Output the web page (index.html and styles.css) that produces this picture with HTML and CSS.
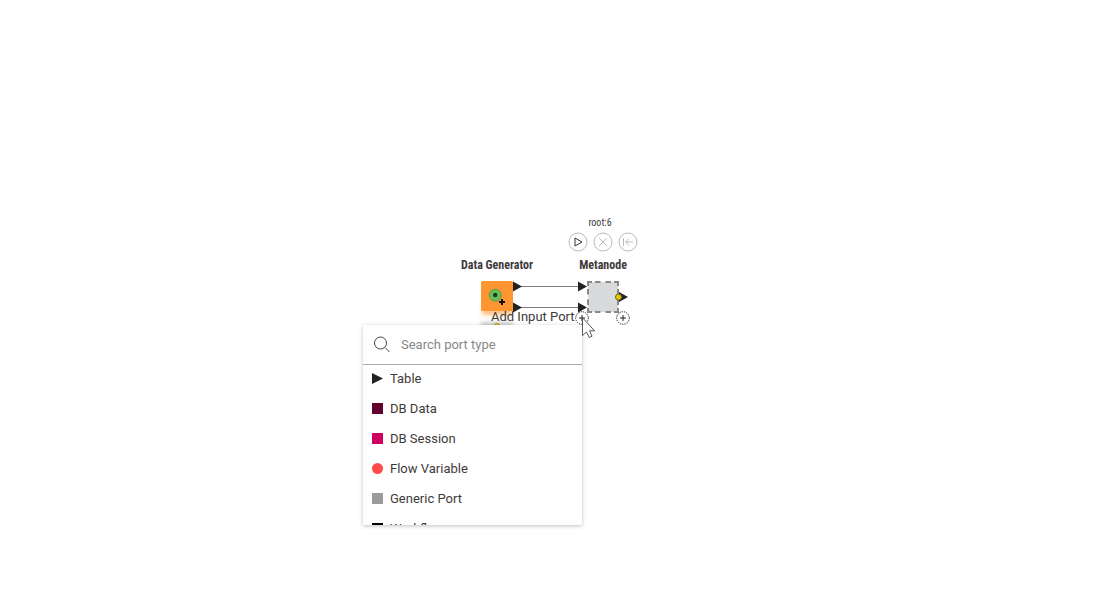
FILE: index.html
```html
<!DOCTYPE html>
<html lang="en">
<head>
<meta charset="utf-8">
<title>Workflow editor</title>
<link rel="stylesheet" href="styles.css">
</head>
<body>
<main class="canvas">
  <svg class="connections" width="240" height="120" viewBox="440 240 240 120" aria-hidden="true">
    <path d="M519 286.500H581M519 307.500H581" stroke="#7d7d7d" fill="none"/>
  </svg>

  <section class="node generator">
    <h2 class="node-name">Data Generator</h2>
    <svg class="node-art" width="60" height="54" viewBox="470 276 60 54" aria-hidden="true">
      <defs><filter id="soft" x="-30%" y="-60%" width="160%" height="220%"><feGaussianBlur stdDeviation="2"/></filter></defs>
      <rect x="482" y="308" width="30" height="7" fill="#ff9632" opacity=".6" filter="url(#soft)"/>
      <rect x="481" y="322" width="32" height="12" rx="2" fill="#aaa" opacity=".6" filter="url(#soft)"/>
      <rect x="481" y="281" width="32" height="30" rx="1.500" fill="#ff9632"/>
      <circle cx="495.200" cy="295.200" r="6" fill="#6bbd58" stroke="#559b4b"/>
      <circle cx="495.200" cy="295" r="2.200" fill="#173b1b"/>
      <path d="M502 299v6M499 302h6" stroke="#111" stroke-width="2"/>
      <circle cx="497" cy="327" r="3.500" fill="#e5cb28" stroke="#ac9820"/>
      <path d="M513 281.500l9 5-9 5zM513 302.500l9 5-9 5z" fill="#222"/>
    </svg>
  </section>

  <section class="node metanode">
    <p class="node-id">root:6</p>
    <div class="actions">
      <button class="action" aria-label="Execute"><svg viewBox="0 0 20 20"><circle cx="10" cy="10" r="9"/><path d="M7 6v8l7-4z" stroke="#333"/></svg></button>
      <button class="action" aria-label="Cancel" disabled><svg viewBox="0 0 20 20"><circle cx="10" cy="10" r="9"/><path d="M6 6l8 8M14 6l-8 8"/></svg></button>
      <button class="action" aria-label="Reset" disabled><svg viewBox="0 0 20 20"><circle cx="10" cy="10" r="9"/><path d="M5.500 6v8M15 10H8M11 6.500L7.500 10l3.500 3.500"/></svg></button>
    </div>
    <h2 class="node-name">Metanode</h2>
    <svg class="node-art" width="80" height="56" viewBox="563 276 80 56" aria-hidden="true">
      <rect x="588" y="282" width="30" height="30" fill="#d9dadc"/>
      <path d="M588 286v-4h4M614 282h4v4M618 308v4h-4M592 312h-4v-4M595 282h5.500M605.500 282h5.500M595 312h5.500M605.500 312h5.500M588 289v5.500M588 299.500v5.500M618 289v5.500M618 299.500v5.500" fill="none" stroke="#888" stroke-width="2"/>
      <path d="M578 281.500l9 5-9 5zM578 302.500l9 5-9 5zM619 292l9 5-9 5z" fill="#222"/>
      <circle cx="618.500" cy="297" r="3" fill="#e4c800" stroke="#71661d"/>
    </svg>
  </section>

  <span class="port-tooltip">Add Input Port</span>
  <button class="add-port input-port" aria-label="Add input port"><svg viewBox="0 0 14 14"><circle cx="7" cy="7" r="6.300"/><path d="M7 4v6M4 7h6"/></svg></button>
  <button class="add-port output-port" aria-label="Add output port"><svg viewBox="0 0 14 14"><circle cx="7" cy="7" r="6.300"/><path d="M7 4v6M4 7h6"/></svg></button>

  <div class="port-menu">
    <label class="search">
      <svg class="search-icon" viewBox="0 0 18 18" aria-hidden="true"><circle cx="7.500" cy="7" r="6"/><path d="M12 11.500l4.500 4.500"/></svg>
      <input class="search-input" type="text" placeholder="Search port type" aria-label="Search port type">
    </label>
    <ul class="port-list">
      <li><button class="port-type"><svg class="port-icon" viewBox="0 0 11 11"><path d="M0 0l11 5.500L0 11z" fill="#222"/></svg>Table</button></li>
      <li><button class="port-type"><span class="port-icon db-data"></span>DB Data</button></li>
      <li><button class="port-type"><span class="port-icon db-session"></span>DB Session</button></li>
      <li><button class="port-type"><span class="port-icon flow-variable"></span>Flow Variable</button></li>
      <li><button class="port-type"><span class="port-icon generic"></span>Generic Port</button></li>
      <li><button class="port-type"><span class="port-icon workflow"></span>Workflow</button></li>
    </ul>
  </div>

  <svg class="pointer" width="14" height="22" viewBox="0 0 14 22" aria-hidden="true"><path d="M.5 .8v17.700l4-3.500 2.700 5.500 2.800-1.200-2.400-5.500h5z" fill="#fff" stroke="#555"/></svg>
</main>
</body>
</html>
```
FILE: styles.css
```css
* { box-sizing: border-box; }

body {
  margin: 0;
  background: #fff;
  color: #3e3a39;
  font-family: Roboto, sans-serif;
  font-size: 13px;
}

button {
  padding: 0;
  border: 0;
  background: none;
  color: inherit;
  font: inherit;
}

svg { display: block; }

.canvas {
  position: relative;
  min-height: 100vh;
  overflow: hidden;
}

.connections {
  position: absolute;
  left: 440px;
  top: 240px;
}

.node {
  position: absolute;
  display: flex;
  flex-direction: column;
  align-items: center;
  font-family: "Roboto Condensed", Roboto, sans-serif;
}

.generator {
  left: 447px;
  top: 258px;
  width: 100px;
}

.generator .node-art { margin-right: -6px; }

.metanode {
  left: 563px;
  top: 216px;
  width: 80px;
}

.node-name {
  margin: 0 0 4px;
  font-size: 12px;
  font-weight: 700;
  line-height: 14px;
  white-space: nowrap;
}

.node-id {
  margin: 0;
  padding-right: 6px;
  font-size: 10px;
  line-height: 14px;
}

.actions {
  display: flex;
  gap: 5px;
  margin: 2px 0 6px;
}

.action {
  width: 20px;
  height: 20px;
}

.action svg {
  width: 20px;
  height: 20px;
  fill: none;
  stroke: #b8babb;
}

.port-tooltip {
  position: absolute;
  left: 491px;
  top: 309px;
  line-height: 16px;
}

.add-port {
  position: absolute;
  top: 311px;
  width: 14px;
  height: 14px;
}

.input-port { left: 575px; }
.output-port { left: 616px; }

.add-port svg {
  fill: #fff;
  stroke: #222;
}

.add-port circle { stroke-dasharray: 1.300 1; }

.port-menu {
  position: absolute;
  left: 363px;
  top: 325px;
  width: 219px;
  max-height: 200px;
  display: flex;
  flex-direction: column;
  background: #fff;
  box-shadow: 0 1px 4px rgba(0, 0, 0, 0.25);
}

.search {
  display: flex;
  flex: none;
  align-items: center;
  gap: 10px;
  height: 40px;
  padding: 0 10px;
  border-bottom: 1px solid #aaa;
}

.search-icon {
  width: 18px;
  height: 18px;
  fill: none;
  stroke: #444;
}

.search-input {
  flex: 1;
  min-width: 0;
  padding: 0;
  border: 0;
  outline: 0;
  background: none;
  color: inherit;
  font: inherit;
}

.search-input::placeholder {
  color: #888;
  opacity: 1;
}

.port-list {
  margin: 0;
  padding: 0;
  overflow: hidden;
  list-style: none;
}

.port-type {
  display: flex;
  align-items: center;
  gap: 7px;
  width: 100%;
  height: 30px;
  padding: 0 9px;
  text-align: left;
}

.port-list li:first-child { margin-top: -2px; }

.port-icon {
  width: 11px;
  height: 11px;
}

.db-data { background: #62012e; }
.db-session { background: #cd0060; }
.flow-variable { border-radius: 50%; background: #ff4b4b; }
.generic { background: #9b9b9b; }
.workflow { background: #000; }

.pointer {
  position: absolute;
  left: 582px;
  top: 317px;
}
```
